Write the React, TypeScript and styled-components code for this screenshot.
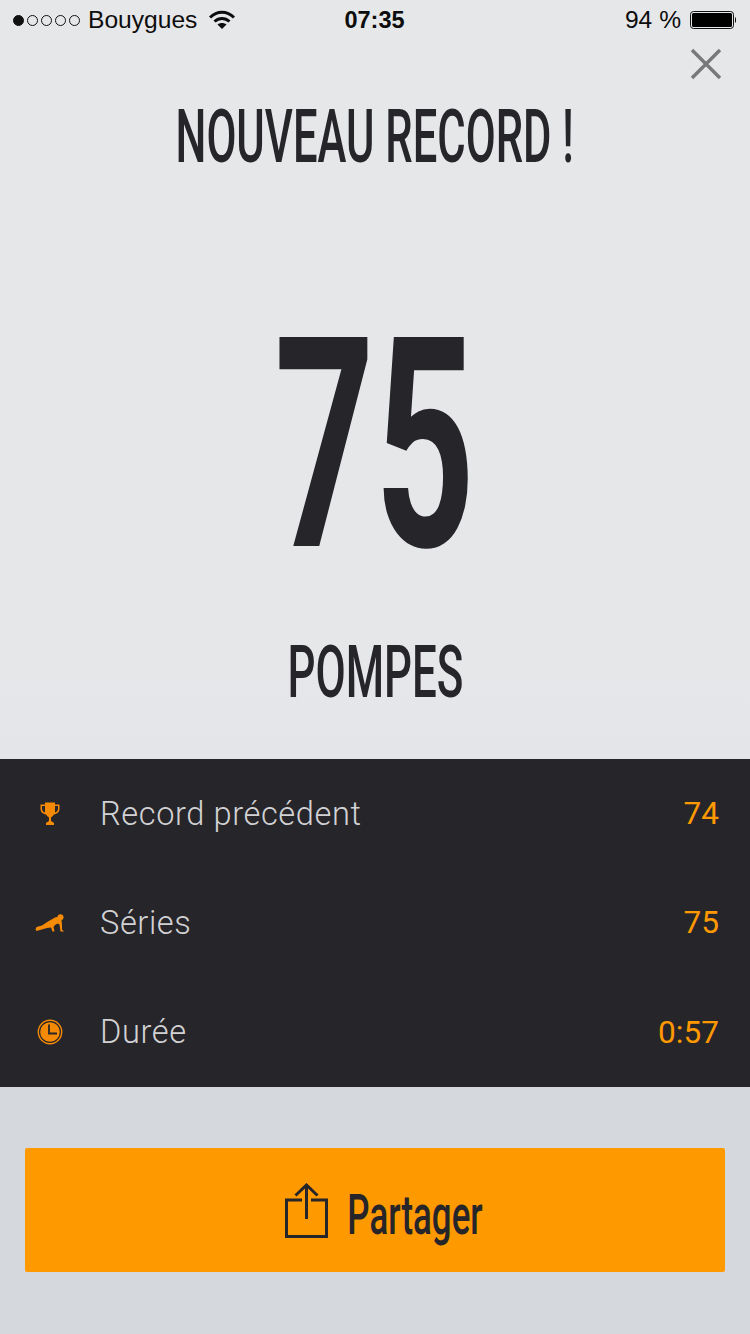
import React from 'react';
import styled, { createGlobalStyle } from 'styled-components';

const Global = createGlobalStyle`
  html, body { margin: 0; padding: 0; background: #d5d8dd; }
  body { font-family: "Liberation Sans", Arial, sans-serif; }
`;

const Page = styled.div`
  width: 750px;
  height: 1334px;
  display: flex;
  flex-direction: column;
  overflow: hidden;
  background: #d5d8dd;
`;

const Top = styled.div`
  height: 759px;
  position: relative;
  display: flex;
  flex-direction: column;
  background: linear-gradient(#e6e7e9 88%, #e3e5e9);
`;

const StatusBar = styled.div`
  height: 40px;
  display: grid;
  grid-template-columns: 1fr auto 1fr;
  align-items: center;
  padding: 0 14px 0 13px;
  font-size: 24.6px;
  color: #0d0d0d;
`;

const StatusLeft = styled.div`
  display: flex;
  align-items: center;
`;

const StatusRight = styled.div`
  display: flex;
  align-items: center;
  justify-content: flex-end;
  gap: 9px;
`;

const Dots = styled.div`
  display: flex;
  gap: 3px;
  margin-right: 8px;
`;

const Dot = styled.span<{ $on?: boolean }>`
  width: 11px;
  height: 11px;
  border-radius: 50%;
  box-sizing: border-box;
  border: 1px solid #111;
  background: ${(p) => (p.$on ? '#111' : 'transparent')};
`;

const Time = styled.div`
  font-weight: 700;
  font-size: 23.5px;
`;

const Close = styled.button`
  position: absolute;
  top: 47px;
  right: 27px;
  width: 34px;
  height: 34px;
  padding: 0;
  border: 0;
  background: none;
  display: block;
`;

const Hero = styled.div`
  display: flex;
  flex-direction: column;
  align-items: center;
`;

const Condensed = styled.div<{ $size: number; $squeeze: number }>`
  font-family: Roboto, "Liberation Sans", sans-serif;
  font-weight: 500;
  color: #26252a;
  white-space: nowrap;
  line-height: 1;
  font-size: ${(p) => p.$size}px;
  transform: scaleX(${(p) => p.$squeeze});
`;

const Heading = styled(Condensed)`
  margin-top: 60px;
`;

const BigNumber = styled(Condensed)`
  margin-top: 125px;
  font-weight: 700;
`;

const Unit = styled(Condensed)`
  margin-top: 44px;
`;

const Panel = styled.div`
  height: 328px;
  background: #26252a;
  display: grid;
  grid-template-rows: repeat(3, 1fr);
  padding: 0 31px 0 34px;
`;

const Row = styled.div`
  display: grid;
  grid-template-columns: 66px 1fr auto;
  align-items: center;
`;

const RowIcon = styled.div`
  display: flex;
  width: 32px;
  justify-content: center;
`;

const Label = styled.div`
  font-size: 32.6px;
  letter-spacing: 0.6px;
  color: #d2d2d4;
  font-family: Roboto, "Liberation Sans", sans-serif;
  font-weight: 300;
`;

const Value = styled.div`
  font-size: 31.6px;
  color: #ff9900;
  font-family: Roboto, "Liberation Sans", sans-serif;
  font-weight: 400;
`;

const Footer = styled.div`
  flex: 1;
  padding: 61px 25px 0;
`;

const ShareButton = styled.button`
  width: 700px;
  height: 124px;
  border: 0;
  padding: 0 0 0 16px;
  background: #ff9900;
  border-radius: 2px;
  display: flex;
  align-items: center;
  justify-content: center;
  gap: 20px;
`;

const ShareLabel = styled(Condensed)`
  width: 134px;
  margin-top: 10px;
  display: flex;
  justify-content: center;
`;

const App: React.FC = () => {
  return (
    <Page>
      <Global />
      <Top>
        <StatusBar>
          <StatusLeft>
            <Dots>
              <Dot $on />
              <Dot />
              <Dot />
              <Dot />
              <Dot />
            </Dots>
            Bouygues
            <svg width="26" height="20" viewBox="0 0 26 20" style={{ marginLeft: 12 }}>
              <path d="M1 7.5 C8 0.5 18 0.5 25 7.5" fill="none" stroke="#0d0d0d" strokeWidth="3" />
              <path d="M5.5 11.5 C10 7.5 16 7.5 20.5 11.5" fill="none" stroke="#0d0d0d" strokeWidth="3" />
              <path d="M8.5 14.5 C11 12.5 15 12.5 17.5 14.5 L13 19 Z" fill="#0d0d0d" />
            </svg>
          </StatusLeft>
          <Time>07:35</Time>
          <StatusRight>
            94 %
            <svg width="46" height="20" viewBox="0 0 46 20">
              <rect x="0.5" y="1.5" width="43" height="17" rx="3" fill="none" stroke="#111" />
              <rect x="2" y="3" width="40" height="14" rx="1.5" fill="#000" />
              <path d="M45 7 C46.5 7.5 46.5 12.5 45 13 Z" fill="#111" />
            </svg>
          </StatusRight>
        </StatusBar>
        <Close aria-label="Fermer">
          <svg width="34" height="34" viewBox="0 0 34 34">
            <path d="M3 3 L31 31 M31 3 L3 31" stroke="#77787a" strokeWidth="3.4" />
          </svg>
        </Close>
        <Hero>
          <Heading $size={74} $squeeze={0.588}>NOUVEAU RECORD !</Heading>
          <BigNumber $size={294} $squeeze={0.595}>75</BigNumber>
          <Unit $size={72} $squeeze={0.609}>POMPES</Unit>
        </Hero>
      </Top>
      <Panel>
        <Row>
          <RowIcon>
            <svg width="20" height="24" viewBox="0 0 20 24">
              <path d="M5 0.5 H15 V2.5 H19.5 V7 C19.5 10 17 12 14 12.5 C13 14 11.5 15 11 15.5 V18.5 C11 19.5 13 20 14 21 V23 H6 V21 C7 20 9 19.5 9 18.5 V15.5 C8.5 15 7 14 6 12.5 C3 12 0.5 10 0.5 7 V2.5 H5 Z M2 4 V7 C2 8.5 3.5 10 5 10.5 L5 4 Z M18 4 H15 V10.5 C16.5 10 18 8.5 18 7 Z" fill="#f58a07" fillRule="evenodd" />
            </svg>
          </RowIcon>
          <Label>Record précédent</Label>
          <Value>74</Value>
        </Row>
        <Row>
          <RowIcon>
            <svg width="30" height="20" viewBox="0 0 30 20">
              <circle cx="25.5" cy="4.2" r="3" fill="#f58a07" />
              <path d="M0.5 16.5 L1.5 14 L7 12.5 L13 8.5 L20 4.5 L24 3.5 L26.5 7 L27 12 L27 16.5 L29 18.5 H25.5 L24.5 11.5 L22.5 10.5 L20 12 L18.5 14 L19.5 18.5 H17.5 L16 14.5 L12 15 L5 17 L1.5 18 Z" fill="#f58a07" />
            </svg>
          </RowIcon>
          <Label>Séries</Label>
          <Value>75</Value>
        </Row>
        <Row>
          <RowIcon>
            <svg width="26" height="26" viewBox="0 0 26 26">
              <circle cx="13" cy="13" r="12.4" fill="#f58a07" />
              <circle cx="13" cy="13" r="10.4" fill="none" stroke="#26252a" strokeWidth="1.2" />
              <path d="M12 5.5 V14.5 H20" fill="none" stroke="#26252a" strokeWidth="1.8" />
            </svg>
          </RowIcon>
          <Label>Durée</Label>
          <Value>0:57</Value>
        </Row>
      </Panel>
      <Footer>
        <ShareButton>
          <svg width="43" height="55" viewBox="0 0 43 55">
            <path d="M17 17 H1.5 V53.5 H41.5 V17 H26 M21.5 36 V2 M10.5 12.5 L21.5 2 L32.5 12.5" fill="none" stroke="#26252a" strokeWidth="3" />
          </svg>
          <ShareLabel $size={56} $squeeze={0.623}>Partager</ShareLabel>
        </ShareButton>
      </Footer>
    </Page>
  );
};

export default App;
